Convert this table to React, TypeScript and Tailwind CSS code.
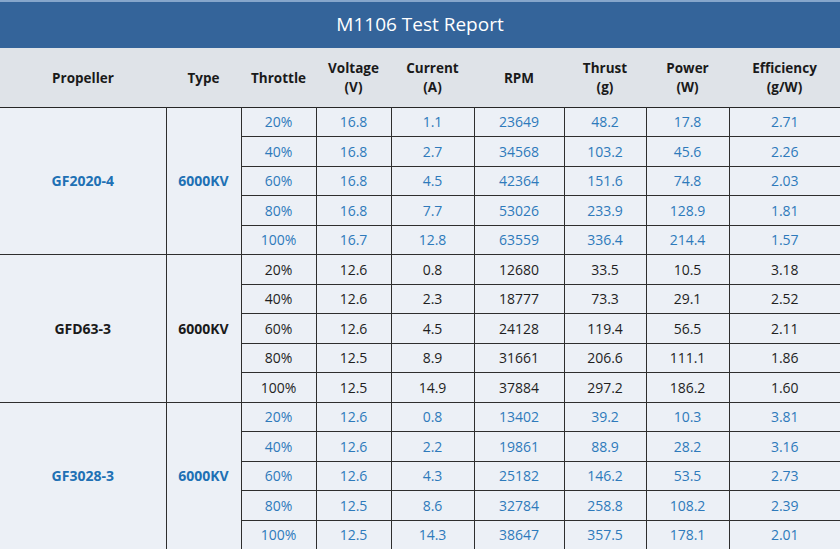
const cols = [166, 75, 75, 75, 83, 90, 82, 83, 111];

const headers: [string, string?][] = [
  ["Propeller"],
  ["Type"],
  ["Throttle"],
  ["Voltage", "(V)"],
  ["Current", "(A)"],
  ["RPM"],
  ["Thrust", "(g)"],
  ["Power", "(W)"],
  ["Efficiency", "(g/W)"],
];

interface Group {
  prop: string;
  type: string;
  blue: boolean;
  rows: string[][];
}

const groups: Group[] = [
  {
    prop: "GF2020-4",
    type: "6000KV",
    blue: true,
    rows: [
      ["20%", "16.8", "1.1", "23649", "48.2", "17.8", "2.71"],
      ["40%", "16.8", "2.7", "34568", "103.2", "45.6", "2.26"],
      ["60%", "16.8", "4.5", "42364", "151.6", "74.8", "2.03"],
      ["80%", "16.8", "7.7", "53026", "233.9", "128.9", "1.81"],
      ["100%", "16.7", "12.8", "63559", "336.4", "214.4", "1.57"],
    ],
  },
  {
    prop: "GFD63-3",
    type: "6000KV",
    blue: false,
    rows: [
      ["20%", "12.6", "0.8", "12680", "33.5", "10.5", "3.18"],
      ["40%", "12.6", "2.3", "18777", "73.3", "29.1", "2.52"],
      ["60%", "12.6", "4.5", "24128", "119.4", "56.5", "2.11"],
      ["80%", "12.5", "8.9", "31661", "206.6", "111.1", "1.86"],
      ["100%", "12.5", "14.9", "37884", "297.2", "186.2", "1.60"],
    ],
  },
  {
    prop: "GF3028-3",
    type: "6000KV",
    blue: true,
    rows: [
      ["20%", "12.6", "0.8", "13402", "39.2", "10.3", "3.81"],
      ["40%", "12.6", "2.2", "19861", "88.9", "28.2", "3.16"],
      ["60%", "12.6", "4.3", "25182", "146.2", "53.5", "2.73"],
      ["80%", "12.5", "8.6", "32784", "258.8", "108.2", "2.39"],
      ["100%", "12.5", "14.3", "38647", "357.5", "178.1", "2.01"],
    ],
  },
];

export default function App() {
  return (
    <div
      className="w-[840px] h-[549px] overflow-hidden bg-[#ecf0f6]"
      style={{ fontFamily: '"Open Sans", "Noto Sans", sans-serif' }}
    >
      <div className="h-[48px] flex items-center justify-center bg-[#34649a] border-t-2 border-[#86a6cb] text-white text-[19px] pb-[2px]">
        M1106 Test Report
      </div>
      <table className="w-[840px] table-fixed border-collapse">
        <colgroup>
          {cols.map((w, i) => (
            <col key={i} style={{ width: w }} />
          ))}
        </colgroup>
        <thead>
          <tr className="h-[59px] bg-[#dfe3e8] border-b-[1.5px] border-[#262626]">
            {headers.map(([a, b], i) => (
              <th
                key={i}
                className="text-[13.5px] font-bold text-[#1a1a1a] leading-[19px] text-center align-middle pt-[2px]"
              >
                <div>{a}</div>
                {b && <div>{b}</div>}
              </th>
            ))}
          </tr>
        </thead>
        <tbody>
          {groups.map((g) =>
            g.rows.map((r, ri) => {
              const color = g.blue ? "text-[#2e7abb]" : "text-[#1f1f1f]";
              return (
                <tr key={g.prop + ri} className="h-[29.5px] border-b-[1.5px] border-[#2e2e2e]">
                  {ri === 0 && (
                    <>
                      <td
                        rowSpan={5}
                        className={`border-r-[1.5px] border-[#2e2e2e] text-center text-[14px] font-bold ${
                          g.blue ? "text-[#2070b4]" : "text-[#1a1a1a]"
                        }`}
                      >
                        {g.prop}
                      </td>
                      <td
                        rowSpan={5}
                        className={`border-r-[1.5px] border-[#2e2e2e] text-center text-[14px] font-bold ${
                          g.blue ? "text-[#2070b4]" : "text-[#1a1a1a]"
                        }`}
                      >
                        {g.type}
                      </td>
                    </>
                  )}
                  {r.map((v, ci) => (
                    <td
                      key={ci}
                      className={`text-center text-[14px] ${color} ${
                        ci < r.length - 1 ? "border-r-[1.5px] border-[#2e2e2e]" : ""
                      }`}
                    >
                      {v}
                    </td>
                  ))}
                </tr>
              );
            })
          )}
        </tbody>
      </table>
    </div>
  );
}
